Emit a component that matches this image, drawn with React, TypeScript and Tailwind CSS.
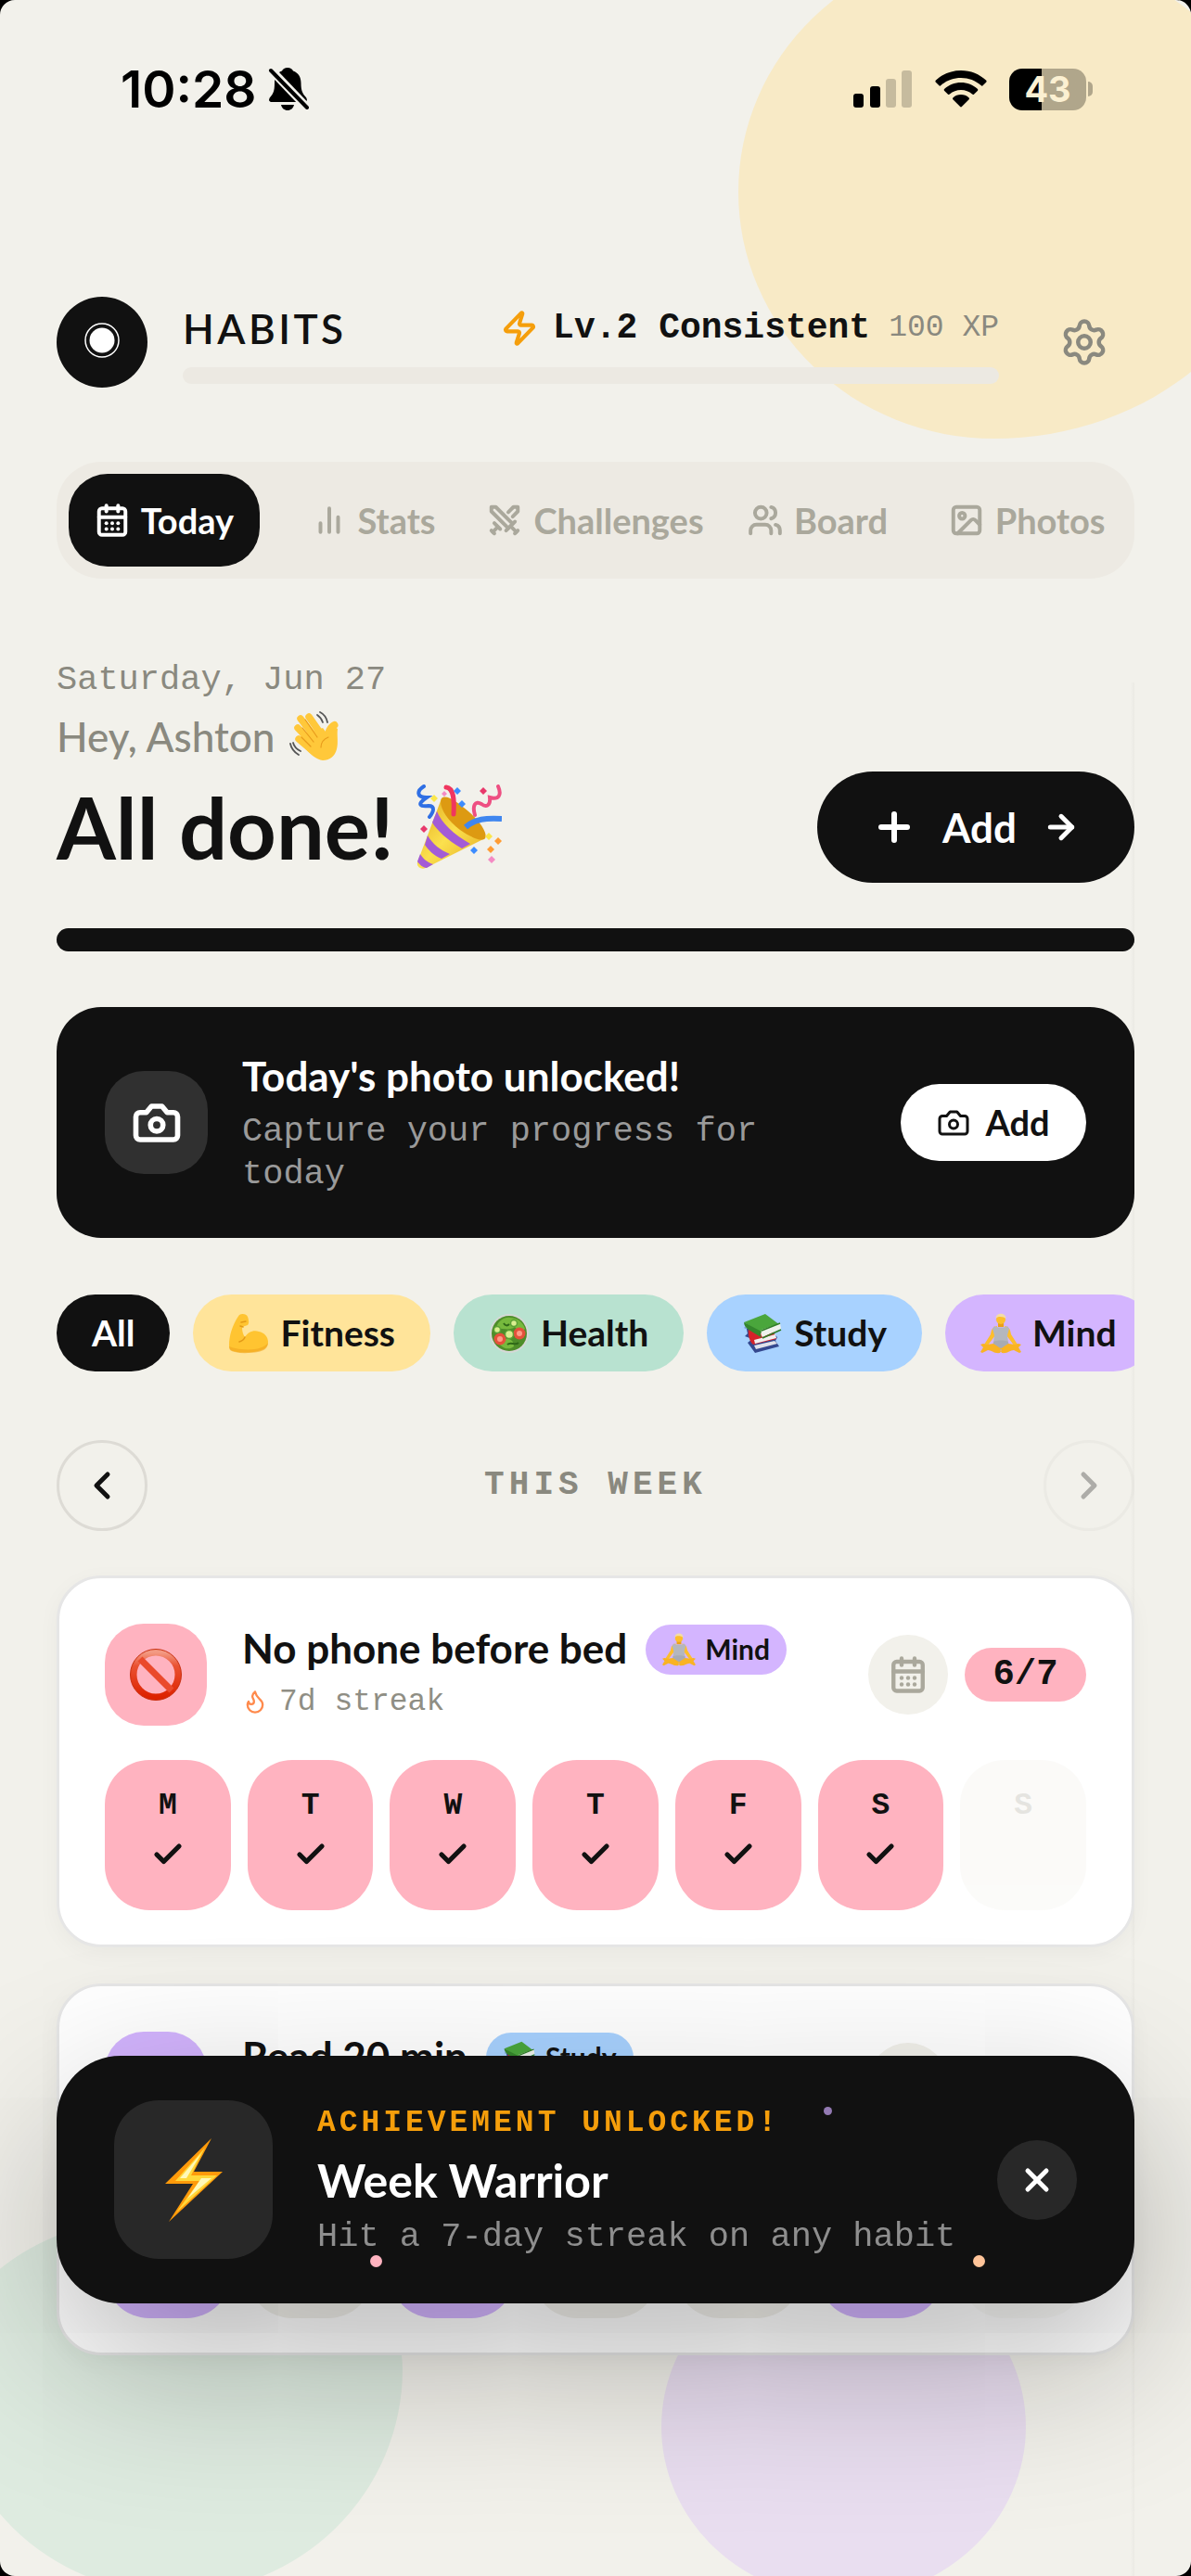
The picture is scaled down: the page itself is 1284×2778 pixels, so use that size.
import React, { useState } from 'react';
import { CalendarDays, Swords, Users, Image, Zap, Settings, Plus, ArrowRight, ChevronLeft, ChevronRight, Check, Flame, X } from 'lucide-react';
import clsx from 'clsx';

type IconProps = { className?: string; strokeWidth?: number };

const MONO = "font-['Liberation_Mono',monospace]";

const BarsIcon = ({ className, strokeWidth = 2 }: IconProps) => (
  <svg viewBox="0 0 24 24" fill="none" stroke="currentColor" strokeWidth={strokeWidth} strokeLinecap="round" className={className}>
    <path d="M6 20v-6M12 20V4M18 20V10" />
  </svg>
);

const CameraIcon = ({ className, strokeWidth = 2 }: IconProps) => (
  <svg viewBox="0 0 24 24" fill="none" stroke="currentColor" strokeWidth={strokeWidth} strokeLinecap="round" strokeLinejoin="round" className={className}>
    <path d="M14.5 4h-5L7 7H4a2 2 0 0 0-2 2v9a2 2 0 0 0 2 2h16a2 2 0 0 0 2-2V9a2 2 0 0 0-2-2h-3l-2.500-3z" />
    <circle cx="12" cy="13" r="3" />
  </svg>
);

const BellOffIcon = ({ className }: IconProps) => (
  <svg viewBox="0 0 44 48" className={className}>
    <path d="M21 1c-3 0-5 1.200-6 3.500C9.500 6.500 7 11 7 17.500c0 9-1.500 11.500-4.500 15C0 35.500 1 38 4 38h35c3 0 4-2.500 1.500-5.500-3-3.500-5-6-5-15 0-6.500-3-11-8.500-13C26 2.200 24 1 21 1z" fill="#000" />
    <path d="M14 41h14c-.8 3.800-3.500 6-7 6s-6.200-2.200-7-6z" fill="#000" />
    <path d="M0 0l44 46" stroke="#f2f1eb" strokeWidth="9" />
    <path d="M3 4l39 40" stroke="#000" strokeWidth="4" strokeLinecap="round" />
  </svg>
);

const SignalIcon = ({ className }: IconProps) => (
  <svg viewBox="0 0 64 40" className={className}>
    <rect x="0" y="25" width="11" height="15" rx="3" />
    <rect x="18" y="17" width="11" height="23" rx="3" />
    <rect x="35" y="9" width="11" height="31" rx="3" fillOpacity="0.2" />
    <rect x="52" y="0" width="11" height="40" rx="3" fillOpacity="0.2" />
  </svg>
);

const WifiIcon = ({ className }: IconProps) => (
  <svg viewBox="0 0 56 40" className={className}>
    <path d="M28 0C17.500 0 8 4 1 10.600c-.8.800-.8 1.500-.1 2.200l3.300 3.300c.7.700 1.500.7 2.200 0C12.200 10.900 19.700 8 28 8s15.800 2.900 21.600 8.100c.7.700 1.500.7 2.200 0l3.300-3.300c.7-.7.7-1.400-.1-2.200C48 4 38.500 0 28 0z" />
    <path d="M28 13c-6.800 0-13 2.500-17.700 6.700-.8.700-.8 1.500-.1 2.200l3.600 3.500c.7.700 1.400.7 2.100.1C19.200 22.700 23.400 21 28 21s8.800 1.700 12.100 4.500c.7.600 1.400.6 2.100-.1l3.600-3.500c.7-.7.7-1.500-.1-2.200C41 15.500 34.800 13 28 13z" />
    <path d="M28 26c-3.200 0-6.200 1.200-8.400 3.200-.8.700-.7 1.500 0 2.200l7.300 7.400c.8.800 1.400.8 2.200 0l7.300-7.400c.7-.7.8-1.500 0-2.200C34.200 27.200 31.200 26 28 26z" />
  </svg>
);

const WaveEmoji = ({ className }: IconProps) => (
  <svg viewBox="0 0 54 54" className={className}>
    <g stroke="#ffc83a" strokeLinecap="round" strokeWidth="7.500" fill="none">
      <path d="M12 8l17 22M21 6l14 20M9 18l17 18M10 30l14 12" />
      <path d="M41 30c1-6 2-12 7.500-15" strokeWidth="8" />
    </g>
    <path d="M20 24l16-6 6 8c3-3 5-7 7-9l3 2c-1 6 1 15-1 22-2 8-8 12-15 12-7-1-13-6-19-13z" fill="#ffc83a" />
    <g stroke="#e89b1c" strokeWidth="1.200" fill="none" strokeLinecap="round">
      <path d="M17 9l13 19M14 18l12 15M13 28l10 10M42 28c-5 2-8 6-8 11" />
    </g>
    <g stroke="#555" strokeWidth="1.800" fill="none" strokeLinecap="round">
      <path d="M33 1c4 2 7 6 8 11M30 4c3 2 5 5 6 8M1 35c1 5 4 9 9 12M4 34c1 4 4 7 8 9" />
    </g>
  </svg>
);

const PartyEmoji = ({ className }: IconProps) => (
  <svg viewBox="0 0 92 92" className={className}>
    <defs>
      <linearGradient id="cone" x1="0" y1="0" x2="1" y2="1">
        <stop offset="0" stopColor="#e2a81c" />
        <stop offset=".5" stopColor="#fbe04e" />
        <stop offset="1" stopColor="#e3a71d" />
      </linearGradient>
    </defs>
    <path d="M27 15L1 84c-1 5 4 8 9 6l64-32z" fill="url(#cone)" />
    <path d="M27 15c-4 8 6 24 20 34 13 9 24 13 27 9 3-5-5-18-18-29-12-10-24-19-29-14z" fill="#dd9a12" />
    <path d="M22 29c5 12 18 25 36 35l-9 5C33 60 22 49 17 41zM12 55c5 9 14 16 24 20l-9 5c-8-3-14-9-18-15zM4 75c3 5 8 9 14 11l-7 4c-4 0-8-4-10-7z" fill="#a35bd6" />
    <path d="M8 2c-8 5-8 12 3 12-12 8-6 10 2 9 7 0 6 6 1 12" stroke="#2f6fe4" strokeWidth="4" fill="none" strokeLinecap="round" />
    <path d="M32 3c8 1 9 12 8 29" stroke="#f0365f" strokeWidth="5" fill="none" strokeLinecap="round" />
    <path d="M88 2c4 9 1 15-9 12 1 9-4 11-9 7-7-4-10 2-7 12" stroke="#ee4f82" strokeWidth="4" fill="none" strokeLinecap="round" />
    <path d="M53 46c10-9 22-10 39-9" stroke="#3f86ef" strokeWidth="6" fill="none" />
    <path d="M44 3l4 4-4 4-4-4zM49 17l4 4-4 4-4-4zM62 67l4 4-4 4-4-4z" fill="#3c8cff" />
    <path d="M19 11l4 4-4 4-4-4zM78 52l4 4-4 4-4-4z" fill="#fbe74a" />
    <path d="M30 7l3 3-3 3-3-3zM81 77l4 4-4 4-4-4z" fill="#f48bc4" />
    <path d="M72 3l4 4-4 4-4-4zM8 44l4 4-4 4-4-4z" fill="#e8386b" />
    <path d="M88 57l4 4-4 4-4-4zM80 66l4 4-4 4-4-4z" fill="#ff9c33" />
  </svg>
);

const ArmEmoji = ({ className }: IconProps) => (
  <svg viewBox="0 0 44 44" className={className}>
    <path d="M12 2c3-2 8-1 9 2 1 3 2 7 0 9l-6 2c0 5 1 8 3 11 3-5 9-8 15-6 6 1 10 6 10 11 0 6-5 9-11 10-8 2-19 2-27 0-3-1-4-3-4-6C1 22 6 10 12 2z" fill="#ffc431" />
    <path d="M18 26c-1 3-3 4-6 5M14 10l5-1M13 14l3 1" stroke="#e39a16" strokeWidth="1.500" fill="none" strokeLinecap="round" />
    <path d="M1 36c0 4 2 5 6 6 8 2 18 1 25 0 6-1 11-4 11-10-5 8-26 10-42 4z" fill="#f0a51f" opacity=".6" />
  </svg>
);

const SaladEmoji = ({ className }: IconProps) => (
  <svg viewBox="0 0 44 44" className={className}>
    <circle cx="22" cy="22" r="21" fill="#d5d8d6" />
    <circle cx="22" cy="22" r="19" fill="#4e8d2a" />
    <path d="M8 16c2-8 9-12 15-11 8 0 14 5 16 12-4 5-8 2-11-2-5 4-12 2-20 1zM7 25c4-4 9-2 10 3 5-1 10 1 10 8-7 6-17 0-20-11z" fill="#76b93d" />
    <circle cx="12" cy="28" r="6.500" fill="#e4513b" />
    <circle cx="33" cy="22" r="6.500" fill="#e4513b" />
    <circle cx="12" cy="28" r="3" fill="#ff9b86" />
    <circle cx="33" cy="22" r="3" fill="#ff9b86" />
    <circle cx="22" cy="23" r="4.500" fill="#d9ef8f" stroke="#5ba136" strokeWidth="1.500" />
    <circle cx="9" cy="18" r="3.500" fill="#d9ef8f" stroke="#5ba136" strokeWidth="1.500" />
    <circle cx="27" cy="11" r="3.500" fill="#d9ef8f" stroke="#5ba136" strokeWidth="1.500" />
    <path d="M20 34c4-4 8 2 12-2M16 11c2 3 4 3 6 1" stroke="#2f6818" strokeWidth="2" fill="none" />
  </svg>
);

const BooksEmoji = ({ className }: IconProps) => (
  <svg viewBox="0 0 44 44" className={className}>
    <path d="M2 16c3-2 3 2 4 6l-3 3 8 3-5 4 8 11 26-7-4-6 2-4-4-4z" fill="#34488f" />
    <path d="M13 35l22-5 3 3-23 6z" fill="#dfe1ea" />
    <path d="M7 17l27 3 3 8-25 6c-4-3-6-11-5-17z" fill="#d4222a" />
    <path d="M13 29l23-6 1 4-23 6z" fill="#f1efef" />
    <path d="M2 10L25 1l16 12-20 9z" fill="#4aa63c" />
    <path d="M21 18l20-7 1 6-20 9c-2-2-2-5-1-8z" fill="#eef2ec" />
    <path d="M2 10l19 10c-2 3-1 5 1 7L7 18c-3-2-5-5-5-8z" fill="#34862c" />
    <path d="M21 19l20-8M22 27l20-9" stroke="#2f7d28" strokeWidth="1.600" fill="none" />
  </svg>
);

const LotusEmoji = ({ className }: IconProps) => (
  <svg viewBox="0 0 44 44" className={className}>
    <path d="M19 9h6v6h-6z" fill="#eba019" />
    <path d="M18 14c-5 1-6 3-7 9L4 34l3 2 9-12zM26 14c5 1 6 3 7 9l7 11-3 2-9-12z" fill="#fdbe2c" />
    <path d="M15 14c2 2 12 2 14 0l2 3-2 7 1 8H14l1-8-2-7z" fill="#b4b7be" />
    <path d="M14 31c4-2 12-2 16 0l1 6-9 3-9-3z" fill="#a8abb3" />
    <path d="M3 33l4 1 7-1 9 6-2 4c-6 1-9-3-13-3l-6 3-2-1 3-5-3-3zM41 33l-4 1-7-1-9 6 2 4c6 1 9-3 13-3l6 3 2-1-3-5 3-3z" fill="#f9b323" />
    <circle cx="22" cy="7" r="5" fill="#fdbe2c" />
    <path d="M16.500 6c-.5-7 11.500-7 11 0-2-2-9-3-11 0z" fill="#f3dca6" />
  </svg>
);

const NoEntryEmoji = ({ className }: IconProps) => (
  <svg viewBox="0 0 56 56" className={className}>
    <defs>
      <linearGradient id="noEntry" x1="0" y1="0" x2="0" y2="1">
        <stop offset="0" stopColor="#f39a83" />
        <stop offset=".3" stopColor="#ea5233" />
        <stop offset="1" stopColor="#dd2200" />
      </linearGradient>
    </defs>
    <circle cx="28" cy="28" r="24" stroke="url(#noEntry)" strokeWidth="7" fill="none" />
    <path d="M11 11l34 34" stroke="#ea4a2c" strokeWidth="7" />
    <circle cx="28" cy="28" r="27.500" stroke="#c83010" strokeWidth="1" fill="none" />
  </svg>
);

const BoltEmoji = ({ className }: IconProps) => (
  <svg viewBox="0 0 64 92" className={className}>
    <path d="M51 1L1 50h30L5 91l58-54H32z" fill="#ff9a0a" />
    <path d="M44 11L12 47h26L13 81l44-40H29z" fill="#ffd83a" />
    <path d="M40 17L17 44h23L25 66l26-22H24z" fill="#fff8b8" />
  </svg>
);

const tabs = [
  { label: 'Today', Icon: CalendarDays },
  { label: 'Stats', Icon: BarsIcon },
  { label: 'Challenges', Icon: Swords },
  { label: 'Board', Icon: Users },
  { label: 'Photos', Icon: Image },
];

const categories = [
  { label: 'All', Icon: null, style: 'bg-[#111111] text-white' },
  { label: 'Fitness', Icon: ArmEmoji, style: 'bg-[#ffe49a]' },
  { label: 'Health', Icon: SaladEmoji, style: 'bg-[#b8e2d0]' },
  { label: 'Study', Icon: BooksEmoji, style: 'bg-[#a8d2ff]' },
  { label: 'Mind', Icon: LotusEmoji, style: 'bg-[#d4b5ff]' },
];

const week = ['M', 'T', 'W', 'T', 'F', 'S', 'S'];

type Habit = {
  name: string;
  Emoji: React.FC<IconProps>;
  color: string;
  tag: string;
  TagEmoji: React.FC<IconProps>;
  tagColor: string;
  streak: string;
  done: boolean[];
};

const habits: Habit[] = [
  {
    name: 'No phone before bed',
    Emoji: NoEntryEmoji,
    color: 'bg-[#ffb3c0]',
    tag: 'Mind',
    TagEmoji: LotusEmoji,
    tagColor: 'bg-[#d4b5ff]',
    streak: '7d streak',
    done: [true, true, true, true, true, true, false],
  },
  {
    name: 'Read 20 min',
    Emoji: BooksEmoji,
    color: 'bg-[#d4b5ff]',
    tag: 'Study',
    TagEmoji: BooksEmoji,
    tagColor: 'bg-[#a8d2ff]',
    streak: '1d streak',
    done: [true, false, true, false, false, true, false],
  },
];

function StatusBar() {
  return (
    <div className="flex items-center justify-between pt-[61px] pr-[106px] pl-[130px] text-black">
      <div className="flex items-center gap-3">
        <span className="font-['Inter',sans-serif] text-[55px] leading-[70px] font-semibold">10:28</span>
        <BellOffIcon className="h-12 w-11" />
      </div>
      <div className="flex items-center gap-6">
        <SignalIcon className="h-10 w-16" />
        <WifiIcon className="h-10 w-14" />
        <div className="flex items-center gap-[2px]">
          <div className="flex h-[45px] w-[83px] items-center justify-center rounded-[14px] bg-linear-to-r from-black from-42% to-[#b0a68b] to-42% font-['Inter',sans-serif] text-[38px] leading-none font-bold text-[#fbf0d2]">
            43
          </div>
          <div className="h-4 w-[5px] rounded-r-full bg-[#b0a68b]" />
        </div>
      </div>
    </div>
  );
}

function Header() {
  return (
    <header className="mt-[184px] flex items-center gap-[38px]">
      <div className="flex size-[98px] shrink-0 items-center justify-center rounded-full bg-[#111111] pb-1">
        <svg viewBox="0 0 40 40" className="size-10">
          <circle cx="20" cy="20" r="18" stroke="#fff" strokeWidth="1.500" fill="none" />
          <circle cx="20" cy="20" r="13.500" fill="#fff" />
        </svg>
      </div>
      <div className="flex-1">
        <div className="flex items-center justify-between">
          <h2 className="text-[44px] leading-[60px] font-semibold tracking-[0.08em]">HABITS</h2>
          <div className={clsx('flex items-center', MONO)}>
            <Zap strokeWidth={2.5} className="size-10 text-[#f59e0b]" />
            <span className="ml-4 text-[38px] leading-[60px] font-bold">Lv.2 Consistent</span>
            <span className="ml-5 text-[33px] leading-[60px] text-[#8a897f]">100 XP</span>
          </div>
        </div>
        <div className="mt-3 h-[18px] rounded-[9px] bg-[#ece9e2]" />
      </div>
      <button type="button" aria-label="Settings" className="flex size-[108px] items-center justify-center text-[#8a897f]">
        <Settings className="size-[54px]" />
      </button>
    </header>
  );
}

function HabitCard({ habit }: { habit: Habit }) {
  const count = habit.done.filter(Boolean).length;
  return (
    <article className="rounded-[48px] border-[3px] border-[#e6e6e6] bg-white px-[49px] pt-[49px] pb-[37px] shadow-[0_6px_24px_rgba(0,0,0,0.04)]">
      <div className="flex items-center">
        <div className={clsx('flex size-[110px] shrink-0 items-center justify-center rounded-[42px]', habit.color)}>
          <habit.Emoji className="size-14" />
        </div>
        <div className="ml-[38px] flex-1">
          <div className="flex items-start gap-5">
            <h3 className="text-[44px] leading-[50px] font-bold">{habit.name}</h3>
            <span className={clsx('flex h-[54px] items-center gap-[10px] rounded-full px-[18px] text-[30px] font-bold', habit.tagColor)}>
              <habit.TagEmoji className="size-9" />
              {habit.tag}
            </span>
          </div>
          <p className={clsx('mt-1 flex items-center gap-3 text-[33px] leading-[51px] text-[#8f8e84]', MONO)}>
            <Flame className="size-7 text-[#ff8a4c]" />
            {habit.streak}
          </p>
        </div>
        <button type="button" aria-label="Calendar" className="flex size-[86px] items-center justify-center rounded-full bg-[#f2f1eb] text-[#aaa89c]">
          <CalendarDays strokeWidth={2.5} className="size-[42px]" />
        </button>
        <span className={clsx('ml-[18px] flex h-[58px] w-[131px] items-center justify-center rounded-full text-[39px] font-bold', habit.color, MONO)}>
          {count}/7
        </span>
      </div>
      <div className="mt-[37px] grid grid-cols-7 gap-[18px]">
        {week.map((day, i) => (
          <button
            key={i}
            type="button"
            disabled={i === 6}
            className={clsx(
              'flex h-[162px] flex-col items-center rounded-[48px] pt-6 disabled:opacity-30',
              habit.done[i] ? habit.color : 'bg-[#f2f1eb] text-[#aaa89c]'
            )}
          >
            <span className={clsx('text-[33px] leading-[51px] font-bold', MONO)}>{day}</span>
            {habit.done[i] && <Check strokeWidth={3.5} className="mt-[9px] size-9" />}
          </button>
        ))}
      </div>
    </article>
  );
}

function Toast({ onClose }: { onClose: () => void }) {
  return (
    <div className="fixed inset-x-[61px] bottom-[294px] flex items-center rounded-[69px] bg-[#111111] px-[62px] py-[48px] text-white shadow-[0_60px_180px_rgba(0,0,0,0.3)]">
      <div className="flex size-[171px] shrink-0 items-center justify-center rounded-[48px] bg-[#282828]">
        <BoltEmoji className="h-[92px] w-16" />
      </div>
      <div className="ml-12 flex-1">
        <p className={clsx('text-[33px] leading-[48px] font-bold tracking-[0.12em] text-[#f59e0b]', MONO)}>ACHIEVEMENT UNLOCKED!</p>
        <p className="text-[50px] leading-[75px] font-bold">Week Warrior</p>
        <p className={clsx('text-[37px] leading-[46px] text-[#8e8e8e]', MONO)}>Hit a 7-day streak on any habit</p>
      </div>
      <button type="button" aria-label="Dismiss" onClick={onClose} className="flex size-[86px] shrink-0 items-center justify-center rounded-full bg-[#282828]">
        <X strokeWidth={3} className="size-10" />
      </button>
      {/* confetti */}
      <span className="absolute top-[215px] left-[338px] size-[13px] rounded-full bg-[#ffb3c0]" />
      <span className="absolute top-[215px] right-[161px] size-[13px] rounded-full bg-[#ffc499]" />
      <span className="absolute top-[55px] right-[326px] size-[9px] rounded-full bg-[#937ab3]" />
    </div>
  );
}

export default function App() {
  const [tab, setTab] = useState('Today');
  const [showToast, setShowToast] = useState(true);

  return (
    <div className="min-h-screen bg-black">
      <div className="relative min-h-screen overflow-hidden rounded-[16px] bg-[#f2f1eb] font-['Lato',sans-serif] text-[#111111]">
        <div className="absolute -top-[59px] -right-[98px] h-[532px] w-[586px] rounded-[47%_53%_53%_47%/50%] bg-[#f8eac6]" />
        <div className="absolute -bottom-[19px] -left-[58px] h-[410px] w-[492px] rounded-[50%_50%_50%_50%/41%_41%_59%_59%] bg-[#deebe0]" />
        <div className="absolute right-[178px] -bottom-[24px] h-[370px] w-[393px] rounded-[50%] bg-[#e9def0]" />

        <div className="relative">
          <StatusBar />
          <div className="px-[61px]">
            <Header />

            <nav className="mt-[75px] flex gap-5 rounded-[48px] bg-[#edeae3] p-[13px]">
              {tabs.map(({ label, Icon }) => (
                <button
                  key={label}
                  type="button"
                  onClick={() => setTab(label)}
                  className={clsx(
                    'flex h-[100px] flex-1 items-center justify-center gap-3 rounded-[42px] text-[38px] font-bold',
                    tab === label ? 'bg-[#111111] text-white' : 'text-[#aaa89c]'
                  )}
                >
                  <Icon strokeWidth={2.5} className="size-[38px] shrink-0" />
                  {label}
                </button>
              ))}
            </nav>

            <main className="relative">
              <div className="absolute top-[30px] right-0 -bottom-[238px] w-1 bg-linear-to-r from-transparent to-black/3" />

              <div className="relative mt-[82px] flex items-end justify-between">
                <div>
                  <p className={clsx('text-[37px] leading-[54px] text-[#8a897f]', MONO)}>Saturday, Jun 27</p>
                  <p className="mt-1 flex items-center gap-4 text-[44px] leading-[60px] font-medium text-[#8a897f]">
                    Hey, Ashton
                    <WaveEmoji className="size-[54px]" />
                  </p>
                  <h1 className="mt-2 flex items-center gap-6 text-[92px] leading-[120px] font-bold">
                    All done!
                    <PartyEmoji className="size-[92px]" />
                  </h1>
                </div>
                <button type="button" className="flex h-[120px] w-[342px] items-center justify-center gap-7 rounded-full bg-[#111111] text-[44px] font-bold text-white">
                  <Plus strokeWidth={3} className="size-12" />
                  Add
                  <ArrowRight strokeWidth={3} className="size-10" />
                </button>
              </div>

              <div className="relative mt-[49px] h-[25px] rounded-full bg-[#111111]" />

              <section className="relative mt-[60px] flex items-center gap-[37px] rounded-[48px] bg-[#111111] px-[52px] py-[46px] text-white">
                <div className="flex size-[111px] shrink-0 items-center justify-center rounded-[42px] bg-[#303030]">
                  <CameraIcon strokeWidth={2.5} className="size-[54px]" />
                </div>
                <div className="flex-1">
                  <h2 className="text-[44px] leading-[57px] font-bold">Today's photo unlocked!</h2>
                  <p className={clsx('mt-2 text-[37px] leading-[46px] text-[#9a9a9a]', MONO)}>Capture your progress for today</p>
                </div>
                <button type="button" className="flex h-[83px] w-[200px] items-center justify-center gap-4 rounded-full bg-white text-[38px] font-bold text-[#111111]">
                  <CameraIcon className="size-9" />
                  Add
                </button>
              </section>

              <div className="relative mt-[61px] flex gap-[25px] overflow-hidden">
                {categories.map(({ label, Icon, style }) => (
                  <button key={label} type="button" className={clsx('flex h-[83px] shrink-0 items-center gap-3 rounded-full px-[38px] text-[39px] font-bold', style)}>
                    {Icon && <Icon className="size-11" />}
                    {label}
                  </button>
                ))}
              </div>

              <div className="relative mt-[74px] flex items-center justify-between">
                <button type="button" aria-label="Previous week" className="flex size-[98px] items-center justify-center rounded-full border-[3px] border-[#dddbd5]">
                  <ChevronLeft strokeWidth={2.5} className="size-12" />
                </button>
                <h2 className={clsx('text-[36px] leading-[54px] font-bold tracking-[0.14em] text-[#8a897f]', MONO)}>THIS WEEK</h2>
                <button type="button" disabled aria-label="Next week" className="flex size-[98px] items-center justify-center rounded-full border-[3px] border-[#dddbd5] disabled:opacity-30">
                  <ChevronRight strokeWidth={2.5} className="size-12" />
                </button>
              </div>

              <div className="relative mt-[48px] flex flex-col gap-[39px]">
                {habits.map((habit) => (
                  <HabitCard key={habit.name} habit={habit} />
                ))}
              </div>
            </main>
          </div>
        </div>

        {showToast && <Toast onClose={() => setShowToast(false)} />}
      </div>
    </div>
  );
}
